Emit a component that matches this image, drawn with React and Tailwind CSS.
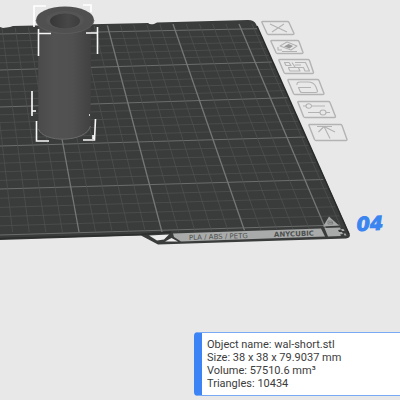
// Major grid lines of the build plate, five cells between two of them
const columns = [
  { top: -91, bottom: -87 },
  { top: -25, bottom: -4 },
  { top: 41, bottom: 79 },
  { top: 107, bottom: 162 },
  { top: 173, bottom: 245 },
  { top: 239, bottom: 327 },
];
const rows = [
  { left: 34, right: 27 },
  { left: 70, right: 60 },
  { left: 107, right: 96 },
  { left: 146, right: 136 },
  { left: 189, right: 179 },
  { left: 235, right: 225 },
];

function subdivide(lines, a, b) {
  const result = [];
  lines.forEach((line, i) => {
    result.push({ a: line[a], b: line[b], major: true });
    const next = lines[i + 1];
    if (!next) return;
    for (let n = 1; n < 5; n++) {
      result.push({
        a: line[a] + ((next[a] - line[a]) * n) / 5,
        b: line[b] + ((next[b] - line[b]) * n) / 5,
        major: false,
      });
    }
  });
  return result;
}

const plateTools = [
  {
    label: "Delete plate",
    place: "left-[65%] top-[5%] w-[9%] h-[4%]",
    size: "0 0 36 16",
    frame: "M2.5 1.5H27.5Q28.500 1.500 29 2.500L34 13.500Q34 14.500 33 14.500H8.500Q7.500 14.500 7 13.500L2 2.500Q1.500 1.500 2.500 1.500Z",
    icon: "M10 4L27 12M24 4L12 12",
  },
  {
    label: "Auto orient",
    place: "left-[67.25%] top-[9.75%] w-[9%] h-[4%]",
    size: "0 0 36 16",
    frame: "M2.500 1.500H28.500Q29.500 1.500 30 2.500L34 13.500Q34 14.500 33 14.500H8.500Q7.500 14.500 7 13.500L2 2.500Q1.500 1.500 2.500 1.500Z",
    icon: "M11 7L18 3L28 7L22 11ZM9 8L9 11L13 11M13 12.500H28",
    solid: "M15 7.500L19.500 5L24 7L20.500 9.500Z",
  },
  {
    label: "Arrange objects",
    place: "left-[69.25%] top-[14.5%] w-[9.5%] h-[4.25%]",
    size: "0 0 38 17",
    frame: "M2.500 1.500H31Q32 1.500 32.500 2.500L36.500 14.500Q36.500 15.500 35.500 15.500H8.500Q7.500 15.500 7 14.500L2 2.500Q1.500 1.500 2.500 1.500Z",
    icon: "M7.500 4.500H12L14 7.500H9ZM15 4.500L18 9M18 4.500H28.500L32.500 13H28L26.500 9.500H11M11.500 10L13 13H23L21.500 10M18 7H24",
  },
  {
    label: "Lock plate",
    place: "left-[71.5%] top-[19.5%] w-[10%] h-[4.5%]",
    size: "0 0 40 18",
    frame: "M2.500 1.500H31.500Q32.500 1.500 33 2.500L38 15.500Q38 16.500 37 16.500H9Q8 16.500 7.500 15.500L2 2.500Q1.500 1.500 2.500 1.500Z",
    icon: "M11 7Q10.500 4 14 4H22Q28 4 30 9L31.500 13Q31.500 14.500 30 14.500H16Q14.500 14.500 14 13L12.500 9.500H25",
  },
  {
    label: "Plate settings",
    place: "left-[74%] top-[25%] w-[10.25%] h-[4.75%]",
    size: "0 0 41 19",
    frame: "M2.500 1.500H32.500Q33.500 1.500 34 2.500L39.500 16.500Q39.500 17.500 38.500 17.500H9Q8 17.500 7.500 16.500L2 2.500Q1.500 1.500 2.500 1.500Z",
    icon: "M7 6H10M15.500 6H29M12 12.500H24M30 12.500H34M10 6a2.750 2.250 0 1 0 5.500 0a2.750 2.250 0 1 0 -5.500 0M24 12.500a3 2.500 0 1 0 6 0a3 2.500 0 1 0 -6 0",
  },
  {
    label: "Move plate to front",
    place: "left-[76.75%] top-[30.75%] w-[10.25%] h-[4.75%]",
    size: "0 0 41 19",
    frame: "M2.500 1.500H33.500Q34.500 1.500 35 2.500L40 16.500Q40 17.500 39 17.500H9Q8 17.500 7.500 16.500L2 2.500Q1.500 1.500 2.500 1.500Z",
    icon: "M10 3.500H25M17 3.500L23 15.500M11.500 9L17 3.500L28 9",
  },
];

function PlateGrid() {
  return (
    <g clipPath="url(#plateSurface)" fill="none">
      {subdivide(rows, "left", "right").map((line, i) => (
        <line
          key={`row-${i}`}
          x1="0"
          y1={line.a}
          x2="340"
          y2={line.b}
          stroke={line.major ? "#6b6e6c" : "#505352"}
          strokeWidth={line.major ? 1 : 0.7}
        />
      ))}
      {subdivide(columns, "top", "bottom").map((line, i) => (
        <line
          key={`column-${i}`}
          x1={line.a}
          y1="24"
          x2={line.b}
          y2="232"
          stroke={line.major ? "#747775" : "#505352"}
          strokeWidth={line.major ? 1.3 : 0.7}
        />
      ))}
      {/* the last cells run off the right side of the plate */}
      <path d="M252 24L343 232" stroke="#505352" strokeWidth="0.7" />
    </g>
  );
}

function Plate() {
  return (
    <g>
      <path
        d="M0 27L3 28L10 27L13 26L148 23Q150 25 154 24L157 22.5L248 20Q254 20 256 24L350 235Q350 238 346 238.5L158 244.5L141 235.5L0 240Z"
        fill="#3a3c3b"
      />
      <path d="M257 26L349 234" stroke="#292b2a" strokeWidth="1.5" />
      <path d="M0 238.5L141 234.5L171 232" stroke="#2c2e2d" strokeWidth="1.5" fill="none" />
      <PlateGrid />
      <path d="M149 235.5L169 234.5L164 239.5L157 240.5Z" fill="#ececec" />
      <path d="M165 241.5L171.5 238L178 241.5Z" fill="#ececec" />
      <path d="M173 233.5L321 228.5L325 236.5L181 241.5L174 237Z" fill="#a9abaa" />
      <path
        d="M324.5 228L340 227.5L341 229.5L338 230L339 232L342 232L343 234L340 234.5L341 236L328 236.5Z"
        fill="#a9abaa"
      />
      <path d="M341 229h2.500l1 2h-2.500ZM343.500 233.500h2l1 2h-2Z" fill="#a9abaa" />
      <path d="M329 216.5L339 225.5L323 226.5Z" fill="#a5a7a6" />
      <path d="M328 221h4l1 3h-5ZM329 222.5h4" stroke="#747675" strokeWidth="0.8" fill="none" />
      <g fontFamily="'DejaVu Sans', sans-serif" fontWeight="700" fill="#4e504f">
        <text x="189" y="240" fontSize="7" fontWeight="400" transform="rotate(-2 189 240)">
          PLA / ABS / PETG
        </text>
        <text x="274" y="237" fontSize="7" transform="rotate(-2 274 237)">
          ANYCUBIC
        </text>
        <text
          x="357"
          y="231"
          fontSize="19"
          fontStyle="italic"
          fill="#3a85f0"
          stroke="#3a85f0"
          strokeWidth="1"
          transform="rotate(-3 357 231)"
        >
          04
        </text>
      </g>
    </g>
  );
}

function Model() {
  return (
    <g>
      <path d="M34 27V6H46M83 5H91V12M32 91V116M32 111H36" stroke="#fff" strokeWidth="1.6" fill="none" />
      <path d="M38 26L38.5 130C43 142 86 143 90.5 128L91 26Z" fill="url(#body)" />
      <path d="M38.5 129C43 143 86 143 90.5 126" stroke="#6a6a6a" strokeWidth="1" fill="none" />
      <ellipse cx="65" cy="20" rx="29" ry="13.5" fill="#505050" />
      <path d="M36 20A29 13.5 0 0 0 94 20" stroke="#5e5e5e" strokeWidth="0.8" fill="none" />
      <ellipse cx="65" cy="20" rx="19" ry="9" fill="#555555" />
      <ellipse cx="65" cy="21" rx="15" ry="7.5" fill="url(#bore)" />
      <path
        d="M38.5 56V29M38.5 33.5H51M86 33H98M97.5 27V54M36.5 121V141H49M83 140H94.5L95.5 119M93 135V139M89 115h1"
        stroke="#f7f7f7"
        strokeWidth="1.6"
        fill="none"
      />
    </g>
  );
}

function PlateTool({ tool }) {
  return (
    <button type="button" aria-label={tool.label} className={`absolute block cursor-pointer ${tool.place}`}>
      <svg viewBox={tool.size} className="block h-full w-full" fill="none" stroke="#b3b3b3" strokeLinejoin="round">
        <path d={tool.frame} strokeWidth="1.4" />
        <path d={tool.icon} strokeWidth="1.1" />
        {tool.solid && <path d={tool.solid} fill="#989898" stroke="none" />}
      </svg>
    </button>
  );
}

function ObjectInfo() {
  return (
    <section className="absolute right-0 bottom-1 w-[206px] rounded-l border-y border-l-8 border-y-[#78aaf3] border-l-[#3c83f6] bg-white py-[5px] pl-[5px] font-[Roboto,sans-serif] text-[11px] leading-[13px] text-[#3c3c3c]">
      <p>Object name: wal-short.stl</p>
      <p>Size: 38 x 38 x 79.9037 mm</p>
      <p>Volume: 57510.6 mm³</p>
      <p>Triangles: 10434</p>
    </section>
  );
}

export default function App() {
  return (
    <main className="relative min-h-screen overflow-hidden bg-[#e8e8e8]">
      <div className="relative aspect-square w-full">
        <svg viewBox="0 0 400 400" className="block h-full w-full">
          <defs>
            <clipPath id="plateSurface">
              <path d="M0 28L250 22L256 26L344 227L338 228L171 232L0 237Z" />
            </clipPath>
            <linearGradient id="body">
              <stop offset="0" stopColor="#4a4a4a" />
              <stop offset="0.3" stopColor="#525252" />
              <stop offset="0.65" stopColor="#505050" />
              <stop offset="1" stopColor="#414141" />
            </linearGradient>
            <linearGradient id="bore">
              <stop offset="0" stopColor="#373737" />
              <stop offset="0.6" stopColor="#474747" />
              <stop offset="1" stopColor="#3d3d3d" />
            </linearGradient>
          </defs>
          <Plate />
          <Model />
        </svg>
        {plateTools.map((tool) => (
          <PlateTool key={tool.label} tool={tool} />
        ))}
      </div>
      <ObjectInfo />
    </main>
  );
}
